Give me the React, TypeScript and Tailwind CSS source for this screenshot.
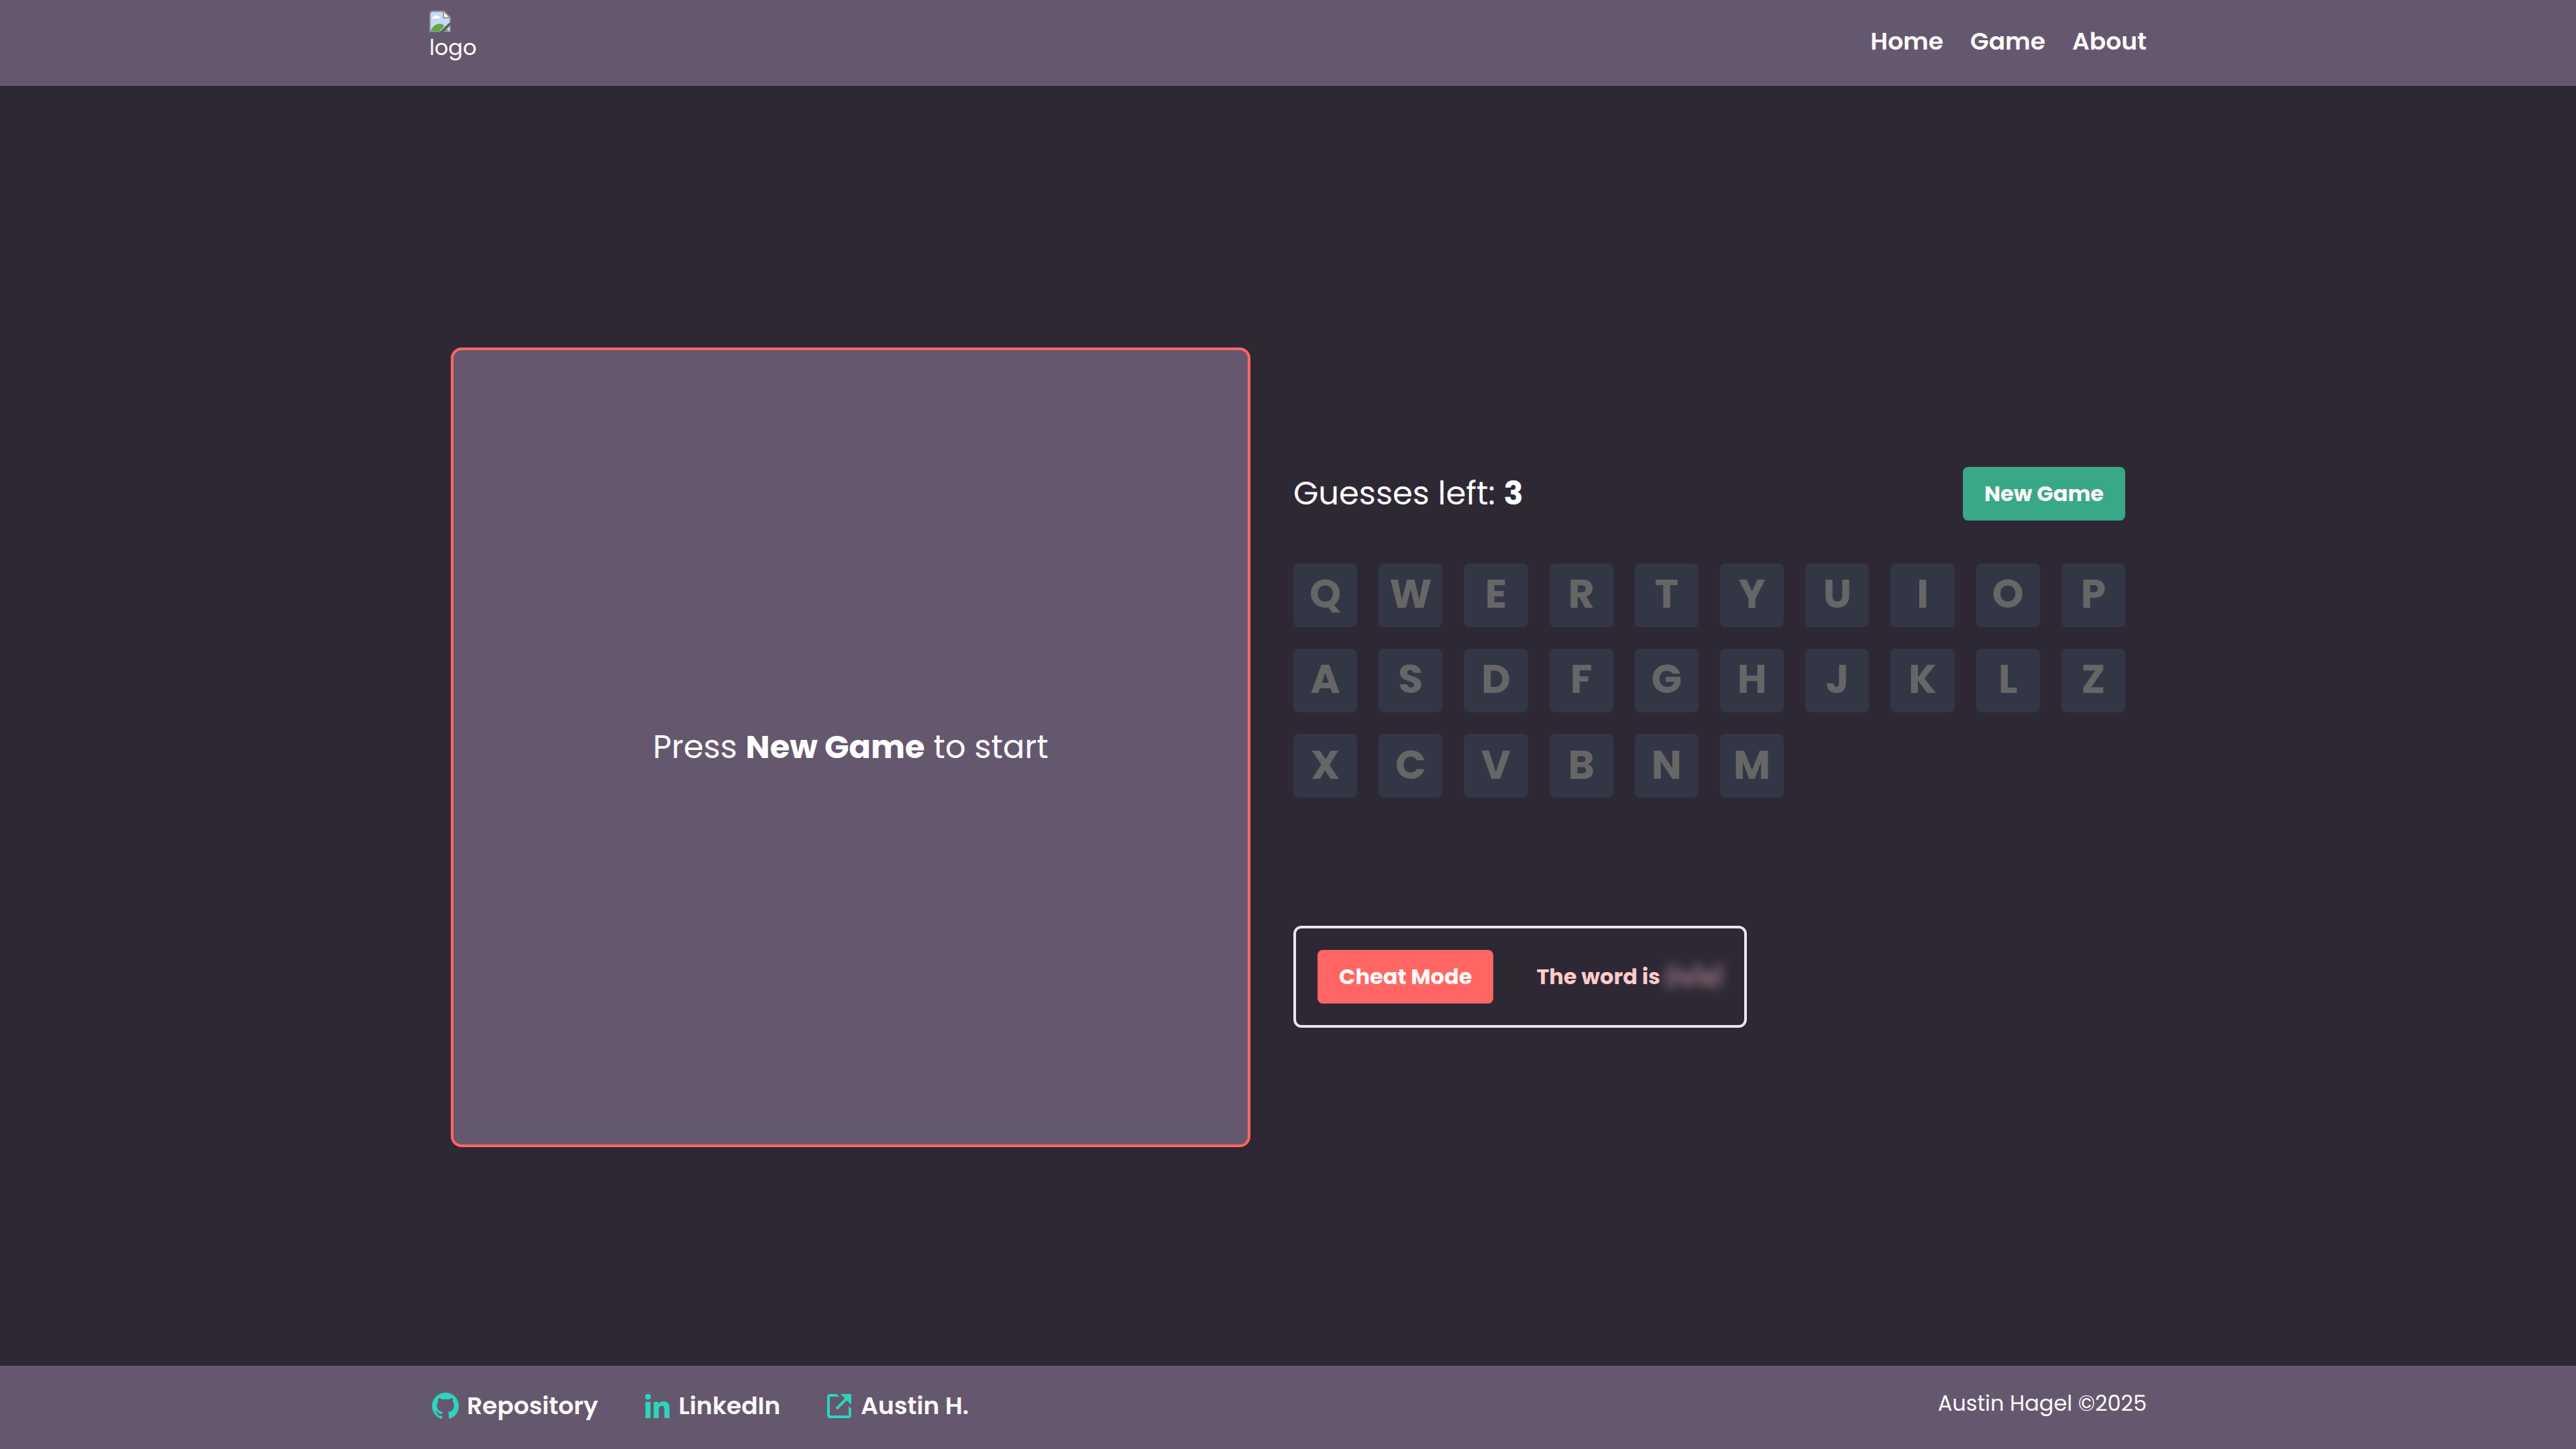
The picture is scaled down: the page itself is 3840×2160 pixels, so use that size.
import { BiLinkExternal, BiLogoGithub, BiLogoLinkedin } from "react-icons/bi";

const LETTERS = "QWERTYUIOPASDFGHJKLZXCVBNM".split("");

const NAV = ["Home", "Game", "About"];

const LINKS = [
  { label: "Repository", Icon: BiLogoGithub },
  { label: "LinkedIn", Icon: BiLogoLinkedin },
  { label: "Austin H.", Icon: BiLinkExternal },
];

function MissingImage() {
  return (
    <svg viewBox="0 0 32 32" className="block size-8" aria-hidden="true">
      <path d="M5 1.2h17L30.8 10v7L16 30.8H1.2V5A3.8 3.8 0 0 1 5 1.2z" fill="#c6d8f5" />
      <path d="M2 30.5C4.500 23 10 19.500 15.500 19.500c3 0 5.500 1.300 7 3.200L14 31z" fill="#5aac38" />
      <path d="M4 11.500c0-2 1.800-3 3.200-2.700C8 6.500 11.500 6 12.700 8.300c2-.3 3.300 1.200 3.300 3.200z" fill="#fff" />
      <path d="M21 1.500V11h10z" fill="#f4f4f4" />
      <path d="M16 30.900H1V5a4 4 0 0 1 4-4h17l9 9v7.500M21 1v9.500h10" fill="none" stroke="#949494" strokeWidth="1.800" />
      <path d="M31 22v9h-9z" fill="#c6d8f5" />
      <path d="M26 26.500L22 31h6.500z" fill="#5aac38" />
      <path d="M31 21.500V31h-9" fill="none" stroke="#949494" strokeWidth="1.500" />
    </svg>
  );
}

function Header() {
  return (
    <header className="bg-[#65586e]">
      <div className="mx-auto flex h-32 w-2/3 items-start justify-between">
        <a href="#home" className="pt-4 text-[32px] leading-[38px]">
          <MissingImage />
          <span className="mt-1 block">logo</span>
        </a>
        <nav className="flex gap-10 pt-9 text-[36px] leading-[52px] font-semibold">
          {NAV.map((item) => (
            <a key={item} href={`#${item.toLowerCase()}`}>
              {item}
            </a>
          ))}
        </nav>
      </div>
    </header>
  );
}

function Board() {
  return (
    <section className="flex aspect-square items-center justify-center rounded-2xl border-4 border-[#ff6663] bg-[#65586e]">
      <p className="text-[48px] leading-[72px] text-white">
        Press <strong className="font-bold">New Game</strong> to start
      </p>
    </section>
  );
}

function Controls() {
  return (
    <section>
      <div className="flex items-center justify-between">
        <p className="text-[48px] leading-[72px] text-white">
          Guesses left: <strong className="font-bold">3</strong>
        </p>
        <button type="button" className="rounded-lg bg-[#38a886] px-8 py-4 text-[32px] leading-[48px] font-bold">
          New Game
        </button>
      </div>
      <div className="mt-16 grid grid-cols-10 gap-8">
        {LETTERS.map((letter) => (
          <button
            key={letter}
            type="button"
            disabled
            className="flex aspect-square items-center justify-center rounded-lg bg-[#333645] pb-1 text-[60px] leading-none font-bold text-[#666666]"
          >
            {letter}
          </button>
        ))}
      </div>
      <div className="mt-[191px] flex w-fit items-center gap-16 rounded-xl border-4 border-gray-200 p-8 text-[32px] leading-[48px] font-bold">
        <button type="button" className="rounded-lg bg-[#ff6663] px-8 py-4">
          Cheat Mode
        </button>
        <p className="text-[#fecaca]">
          The word is <span className="inline-block font-normal italic blur-sm">(n/a)</span>
        </p>
      </div>
    </section>
  );
}

function Footer() {
  return (
    <footer className="bg-[#65586e] py-8">
      <div className="mx-auto flex min-h-[60px] w-2/3 items-start justify-between">
        <ul className="flex gap-16 text-[36px] leading-[56px] font-semibold">
          {LINKS.map(({ label, Icon }) => (
            <li key={label}>
              <a href={`#${label}`} className="flex items-center gap-2">
                <Icon className="size-12 text-[#2dd4bf]" aria-hidden="true" />
                {label}
              </a>
            </li>
          ))}
        </ul>
        <p className="text-[32px] leading-[48px]">Austin Hagel ©2025</p>
      </div>
    </footer>
  );
}

export default function App() {
  return (
    <div className="flex min-h-screen flex-col bg-[#2e2835] font-[Poppins,Inter,sans-serif] text-[#fffafa]">
      <Header />
      <main className="flex flex-1 items-center pt-16">
        <div className="mx-auto grid w-[65%] grid-cols-[149fr_155fr] items-center gap-16">
          <Board />
          <Controls />
        </div>
      </main>
      <Footer />
    </div>
  );
}
